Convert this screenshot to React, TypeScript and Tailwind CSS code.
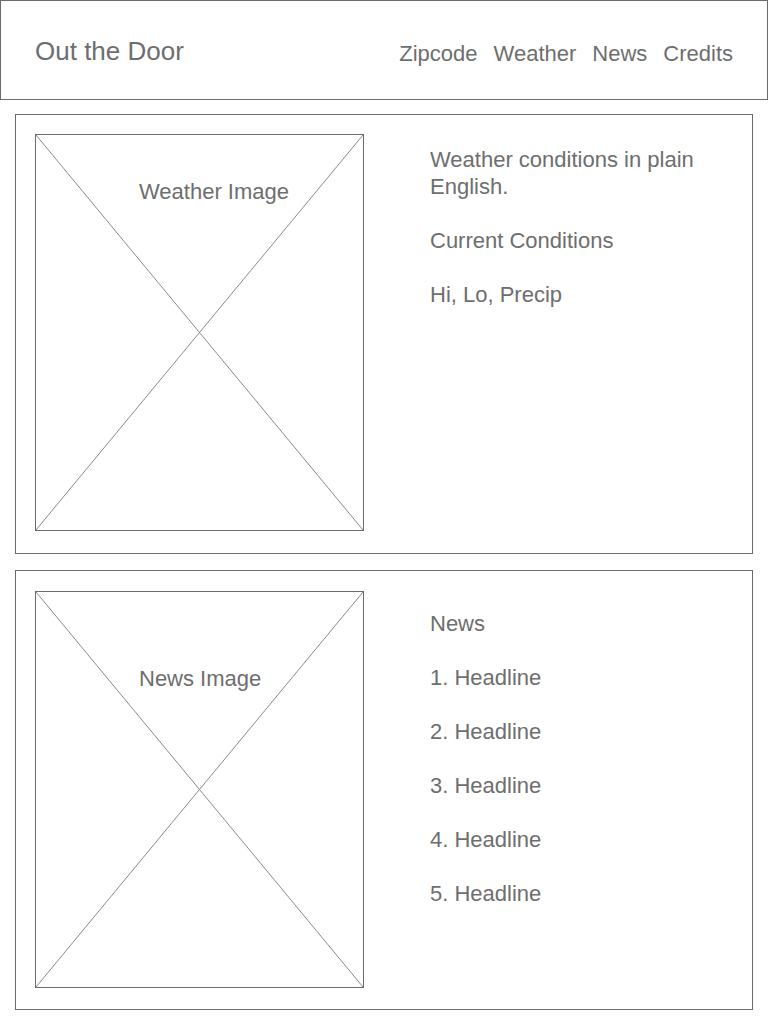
const font = { fontFamily: '"Liberation Sans", Arial, Helvetica, sans-serif' };

function Placeholder({ label, labelClass }: { label: string; labelClass: string }) {
  return (
    <div className="relative w-[329px] h-[397px] shrink-0 border border-[#6b6b6b]">
      <svg className="absolute inset-0 w-full h-full" viewBox="0 0 100 100" preserveAspectRatio="none">
        <line x1="0" y1="0" x2="100" y2="100" stroke="#8a8a8a" strokeWidth="1" vectorEffect="non-scaling-stroke" />
        <line x1="100" y1="0" x2="0" y2="100" stroke="#8a8a8a" strokeWidth="1" vectorEffect="non-scaling-stroke" />
      </svg>
      <span className={`absolute left-[103px] text-[22px] leading-[27px] ${labelClass}`}>{label}</span>
    </div>
  );
}

export default function App() {
  const headlines = ["1. Headline", "2. Headline", "3. Headline", "4. Headline", "5. Headline"];

  return (
    <div className="w-[768px] h-[1024px] bg-white text-[#6e6e6e]" style={font}>
      <header className="h-[100px] border border-[#6b6b6b] flex items-center justify-between pl-[34px] pr-[34px] pt-[6px]">
        <h1 className="text-[26px] leading-[30px] -mt-[4px]">Out the Door</h1>
        <nav className="flex gap-[16px] text-[22px] leading-[27px]">
          <a>Zipcode</a>
          <a>Weather</a>
          <a>News</a>
          <a>Credits</a>
        </nav>
      </header>

      <div className="flex flex-col gap-[16px] pl-[15px] pt-[14px]">
        {/* weather */}
        <section className="w-[738px] h-[440px] border border-[#6b6b6b] flex pl-[19px] pt-[19px]">
          <Placeholder label="Weather Image" labelClass="top-[43px]" />
          <div className="ml-[66px] pt-[12px] w-[300px] text-[22px] leading-[27px] flex flex-col gap-[27px]">
            <p>Weather conditions in plain English.</p>
            <p>Current Conditions</p>
            <p>Hi, Lo, Precip</p>
          </div>
        </section>

        {/* news */}
        <section className="w-[738px] h-[440px] border border-[#6b6b6b] flex pl-[19px] pt-[20px]">
          <Placeholder label="News Image" labelClass="top-[73px]" />
          <div className="ml-[66px] pt-[19px] w-[300px] text-[22px] leading-[27px] flex flex-col gap-[27px]">
            <p>News</p>
            {headlines.map((h) => (
              <p key={h}>{h}</p>
            ))}
          </div>
        </section>
      </div>
    </div>
  );
}
